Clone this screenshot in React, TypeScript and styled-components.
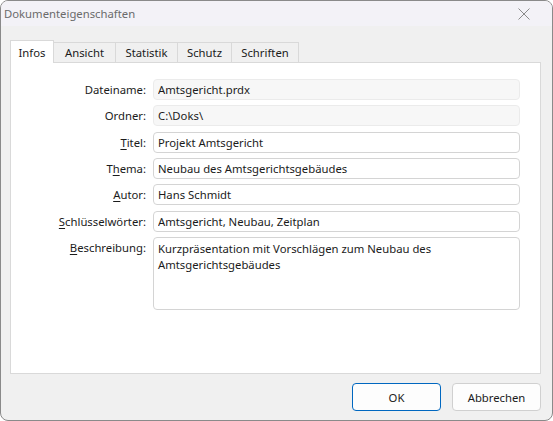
import React from "react";
import styled, { createGlobalStyle } from "styled-components";

const Global = createGlobalStyle`
  html, body { margin: 0; padding: 0; background: #ffffff; }
  * { box-sizing: border-box; }
`;

const FONT = `"Noto Sans", "Open Sans", sans-serif`;

const Window = styled.div`
  width: 553px;
  height: 421px;
  border: 1px solid #8a8a8a;
  border-radius: 8px;
  overflow: hidden;
  background: #f0f0f0;
  display: flex;
  flex-direction: column;
  font-family: ${FONT};
  font-size: 11.3px;
  color: #1b1b1b;
`;

const TitleBar = styled.div`
  height: 25px;
  flex: none;
  background: #f3f2f7;
  display: flex;
  align-items: center;
  justify-content: space-between;
  padding: 0 22px 0 3px;
`;

const Title = styled.span`
  color: #6b6b6b;
`;

const Body = styled.div`
  flex: 1;
  display: flex;
  flex-direction: column;
  padding: 14px 11px 9px 9px;
`;

const TabRow = styled.div`
  display: flex;
  align-items: flex-end;
  height: 23px;
  position: relative;
  z-index: 1;
`;

const Tab = styled.div<{ $active?: boolean; $w: number }>`
  width: ${(p) => p.$w}px;
  height: ${(p) => (p.$active ? "23px" : "21px")};
  display: flex;
  align-items: center;
  justify-content: center;
  background: ${(p) => (p.$active ? "#ffffff" : "#f0f0f0")};
  border: 1px solid #d9d9d9;
  border-bottom: ${(p) => (p.$active ? "none" : "1px solid #d9d9d9")};
  margin-left: -1px;
  padding-top: ${(p) => (p.$active ? "1px" : "0")};
  color: #1b1b1b;
  &:first-child { margin-left: 0; }
`;

const Panel = styled.div`
  height: 312px;
  margin-top: -1px;
  background: #ffffff;
  border: 1px solid #d9d9d9;
  padding: 16px 20px 0 0;
`;

const Form = styled.div`
  display: grid;
  grid-template-columns: 135px 1fr;
  column-gap: 7px;
  row-gap: 5.33px;
`;

const Label = styled.label`
  text-align: right;
  line-height: 21px;
  white-space: nowrap;
`;

const Key = styled.span`
  text-decoration: underline;
  text-underline-offset: 2px;
`;

const Field = styled.input<{ $ro?: boolean }>`
  height: 21px;
  width: 100%;
  margin: 0;
  padding: 0 4px;
  font: inherit;
  color: #1b1b1b;
  background: ${(p) => (p.$ro ? "#f7f7f7" : "#ffffff")};
  border: 1px solid ${(p) => (p.$ro ? "#ebebeb" : "#d4d4d4")};
  border-radius: 4px;
  outline: none;
`;

const Area = styled.textarea`
  height: 73px;
  width: 100%;
  margin: 0;
  padding: 3px 4px;
  font: inherit;
  line-height: 16px;
  color: #1b1b1b;
  background: #ffffff;
  border: 1px solid #d4d4d4;
  border-radius: 4px;
  resize: none;
  outline: none;
  overflow: hidden;
`;

const AreaLabel = styled(Label)`
  line-height: 16px;
  padding-top: 3px;
`;

const Buttons = styled.div`
  display: flex;
  justify-content: flex-end;
  gap: 11px;
  margin-top: 9px;
`;

const Button = styled.button<{ $primary?: boolean }>`
  width: 89px;
  height: 28px;
  font: inherit;
  color: #1b1b1b;
  background: #fdfdfd;
  border: 1px solid ${(p) => (p.$primary ? "#0067c0" : "#d0d0d0")};
  border-radius: 4px;
  padding: 0;
`;

const Close = styled.svg`
  width: 12px;
  height: 12px;
`;

export default function App() {
  return (
    <>
      <Global />
      <Window>
        <TitleBar>
          <Title>Dokumenteigenschaften</Title>
          <Close viewBox="0 0 12 12">
            <path d="M0.5 0.5 L11.5 11.5 M11.5 0.5 L0.5 11.5" stroke="#8a8a8a" strokeWidth="1" fill="none" />
          </Close>
        </TitleBar>
        <Body>
          <TabRow>
            <Tab $active $w={44}>Infos</Tab>
            <Tab $w={63}>Ansicht</Tab>
            <Tab $w={63}>Statistik</Tab>
            <Tab $w={55}>Schutz</Tab>
            <Tab $w={68}>Schriften</Tab>
          </TabRow>
          <Panel>
            <Form>
              <Label>Dateiname:</Label>
              <Field $ro readOnly value="Amtsgericht.prdx" />
              <Label>Ordner:</Label>
              <Field $ro readOnly value="C:\Doks\" />
              <Label><Key>T</Key>itel:</Label>
              <Field readOnly value="Projekt Amtsgericht" />
              <Label>T<Key>h</Key>ema:</Label>
              <Field readOnly value="Neubau des Amtsgerichtsgebäudes" />
              <Label><Key>A</Key>utor:</Label>
              <Field readOnly value="Hans Schmidt" />
              <Label><Key>S</Key>chlüsselwörter:</Label>
              <Field readOnly value="Amtsgericht, Neubau, Zeitplan" />
              <AreaLabel><Key>B</Key>eschreibung:</AreaLabel>
              <Area readOnly value="Kurzpräsentation mit Vorschlägen zum Neubau des Amtsgerichtsgebäudes" />
            </Form>
          </Panel>
          <Buttons>
            <Button $primary>OK</Button>
            <Button>Abbrechen</Button>
          </Buttons>
        </Body>
      </Window>
    </>
  );
}
